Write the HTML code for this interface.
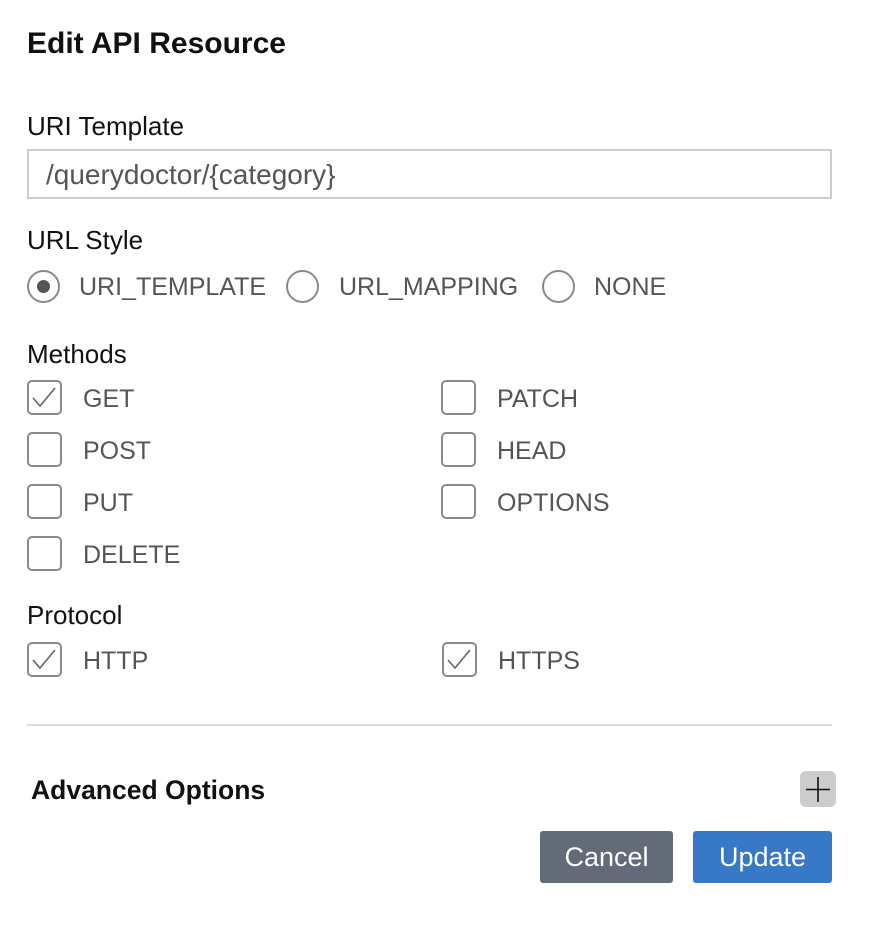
<!DOCTYPE html>
<html><head><style>
*{box-sizing:border-box;margin:0;padding:0}
body{width:893px;height:943px;background:#fff;font-family:"Liberation Sans",sans-serif;position:relative;overflow:hidden}
.a{position:absolute;white-space:nowrap}
.lbl{font-size:26px;color:#111;line-height:30px}
.opt{font-size:25px;color:#555;line-height:30px}
.cb{position:absolute;width:35px;height:35px;border:2px solid #8a8a8a;border-radius:5px}
.rd{position:absolute;width:33px;height:33px;border:2px solid #8a8a8a;border-radius:50%}
</style></head><body>
<div class="a" style="left:27px;top:27px;font-size:30px;font-weight:bold;color:#111;line-height:34px">Edit API Resource</div>
<div class="a lbl" style="left:27px;top:111px">URI Template</div>
<div class="a" style="left:27px;top:149px;width:805px;height:50px;border:2px solid #ccc"></div>
<div class="a" style="left:46px;top:159px;font-size:28px;color:#555;line-height:32px">/querydoctor/{category}</div>
<div class="a lbl" style="left:27px;top:225px">URL Style</div>
<div class="rd" style="left:27px;top:270px"></div>
<div class="a" style="left:37px;top:280px;width:13px;height:13px;border-radius:50%;background:#555"></div>
<div class="a opt" style="left:79px;top:272px">URI_TEMPLATE</div>
<div class="rd" style="left:286px;top:270px"></div>
<div class="a opt" style="left:339px;top:272px">URL_MAPPING</div>
<div class="rd" style="left:542px;top:270px"></div>
<div class="a opt" style="left:594px;top:272px">NONE</div>
<div class="a lbl" style="left:27px;top:339px">Methods</div>

<div class="cb" style="left:27px;top:380px"><svg width="31" height="31" style="position:absolute;left:0;top:0"><path d="M4 16 L11 24 L26 6" stroke="#666" stroke-width="1.6" fill="none"/></svg></div>
<div class="a opt" style="left:83px;top:384px">GET</div>
<div class="cb" style="left:27px;top:432px"></div><div class="a opt" style="left:83px;top:436px">POST</div>
<div class="cb" style="left:27px;top:484px"></div><div class="a opt" style="left:83px;top:488px">PUT</div>
<div class="cb" style="left:27px;top:536px"></div><div class="a opt" style="left:83px;top:540px">DELETE</div>
<div class="cb" style="left:441px;top:380px"></div><div class="a opt" style="left:497px;top:384px">PATCH</div>
<div class="cb" style="left:441px;top:432px"></div><div class="a opt" style="left:497px;top:436px">HEAD</div>
<div class="cb" style="left:441px;top:484px"></div><div class="a opt" style="left:497px;top:488px">OPTIONS</div>

<div class="a lbl" style="left:27px;top:600px">Protocol</div>
<div class="cb" style="left:27px;top:642px"><svg width="31" height="31" style="position:absolute;left:0;top:0"><path d="M4 16 L11 24 L26 6" stroke="#666" stroke-width="1.6" fill="none"/></svg></div>
<div class="a opt" style="left:83px;top:646px">HTTP</div>
<div class="cb" style="left:442px;top:642px"><svg width="31" height="31" style="position:absolute;left:0;top:0"><path d="M4 16 L11 24 L26 6" stroke="#666" stroke-width="1.6" fill="none"/></svg></div>
<div class="a opt" style="left:498px;top:646px">HTTPS</div>

<div class="a" style="left:27px;top:724px;width:805px;height:2px;background:#ddd"></div>
<div class="a" style="left:31px;top:774px;font-size:26.5px;font-weight:bold;color:#111;line-height:32px">Advanced Options</div>
<div class="a" style="left:800px;top:771px;width:36px;height:36px;background:#ccc;border-radius:6px"><svg width="36" height="36"><path d="M6 18.5 H30 M18 6 V31" stroke="#111" stroke-width="1.6"/></svg></div>
<div class="a" style="left:540px;top:831px;width:133px;height:52px;background:#636b78;border-radius:3px;color:#fff;font-size:27px;line-height:52px;text-align:center">Cancel</div>
<div class="a" style="left:693px;top:831px;width:139px;height:52px;background:#3778c7;border-radius:3px;color:#fff;font-size:27px;line-height:52px;text-align:center">Update</div>
</body></html>
